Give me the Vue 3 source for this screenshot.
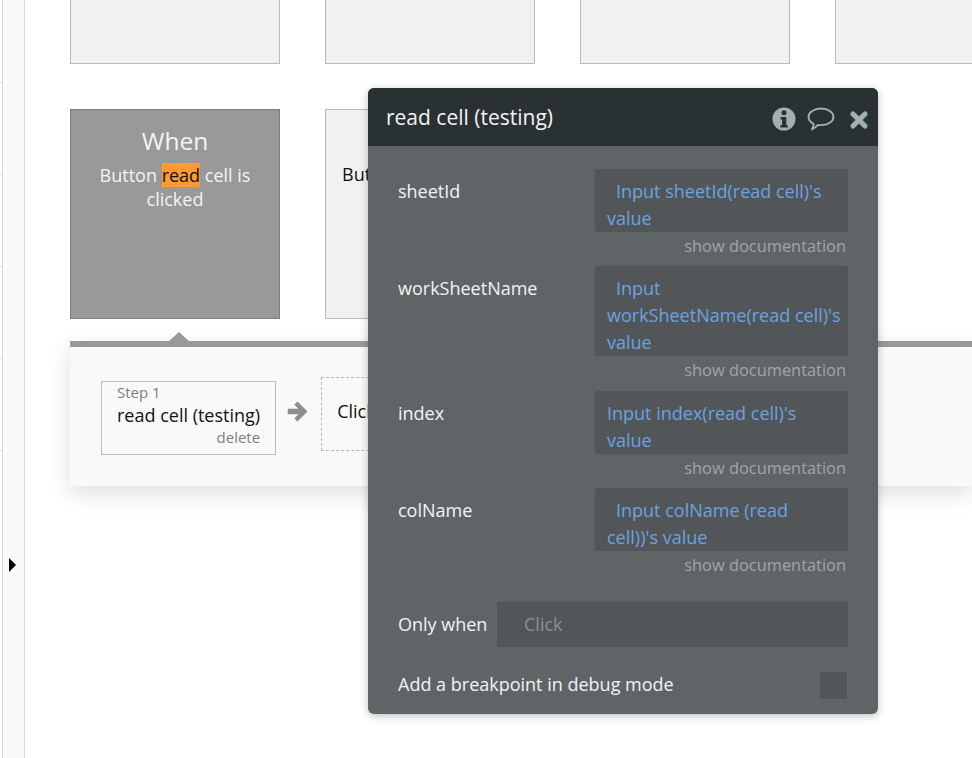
<script setup>
const fields = [
  { name: 'sheetId', value: "Input sheetId(read cell)'s value", indent: true },
  { name: 'workSheetName', value: "Input workSheetName(read cell)'s value", indent: true },
  { name: 'index', value: "Input index(read cell)'s value", indent: false },
  { name: 'colName', value: "Input colName (read cell))'s value", indent: true }
]
const ticks = [0, 1, 2, 3, 4]
</script>

<template>
  <div class="page">
    <aside class="rail">
      <div class="ticks"><span v-for="t in ticks" :key="t" class="tick"></span></div>
      <div class="strip"><span class="caret"></span></div>
    </aside>

    <main class="canvas">
      <div class="row row-top">
        <div class="card"></div>
        <div class="card"></div>
        <div class="card"></div>
        <div class="card"></div>
      </div>
      <div class="row row-second">
        <div class="card card-active">
          <div class="when">When</div>
          <div class="event">Button <span class="hl">read</span> cell is clicked</div>
        </div>
        <div class="card card-plain">Button</div>
      </div>

      <section class="steps">
        <span class="notch"></span>
        <div class="steps-body">
          <div class="step">
            <div class="step-no">Step 1</div>
            <div class="step-name">read cell (testing)</div>
            <div class="step-del">delete</div>
          </div>
          <svg class="arrow" viewBox="0 0 20 20" width="21" height="21">
            <path d="M1 7.700h10.500L7.300 3.500 9.900.800 19.200 10 9.900 19.200 7.300 16.500l4.200-4.200H1z" fill="#8e8e8e" stroke="#8e8e8e" stroke-width="0.600" stroke-linejoin="round"/>
          </svg>
          <div class="step-new">Click</div>
        </div>
      </section>
    </main>

    <section class="editor">
      <header class="editor-head">
        <h2 class="editor-title">read cell (testing)</h2>
        <svg class="ico-info" viewBox="0 0 24 24" width="24" height="24">
          <circle cx="12" cy="12" r="11.500" fill="#a4afaf"/>
          <circle cx="12" cy="5.800" r="2.500" fill="#2a3133"/>
          <path d="M8.600 10h5.700v8h1.500v2.400H8.400V18h1.700v-5.500H8.600z" fill="#2a3133"/>
        </svg>
        <svg class="ico-chat" viewBox="0 0 28 25" width="28" height="25">
          <path d="M14 1.500c7 0 12.500 3.700 12.500 8.300S21 18.100 14 18.100c-1 0-2 0-3-.2-1.800 2-3.700 3.500-6.200 4.600 1.100-1.600 1.700-3.200 1.900-5.600C3.500 15.400 1.500 12.800 1.500 9.800 1.500 5.200 7 1.500 14 1.500z" fill="none" stroke="#a4afaf" stroke-width="1.800" stroke-linejoin="round"/>
        </svg>
        <svg class="ico-close" viewBox="0 0 20 20" width="20" height="20">
          <path d="M4 4l12 12M16 4L4 16" stroke="#a4afaf" stroke-width="5.200" stroke-linecap="round" fill="none"/>
        </svg>
      </header>

      <div class="editor-body">
        <div v-for="f in fields" :key="f.name" class="field">
          <div class="field-label">{{ f.name }}</div>
          <div class="field-main">
            <div class="field-box" :class="{ indented: f.indent }">{{ f.value }}</div>
            <div class="field-doc">show documentation</div>
          </div>
        </div>

        <div class="only">
          <span class="only-label">Only when</span>
          <div class="only-box">Click</div>
        </div>

        <div class="debug">
          <span class="debug-label">Add a breakpoint in debug mode</span>
          <span class="check"></span>
        </div>
      </div>
    </section>
  </div>
</template>

<style>
html, body { margin: 0; background: #fff; }
</style>

<style scoped>
.page {
  position: relative;
  display: flex;
  width: 972px;
  height: 758px;
  overflow: hidden;
  background: #fff;
  font-family: "Open Sans", "Liberation Sans", sans-serif;
  font-size: 18px;
}

/* left rail */
.rail { display: flex; flex: 0 0 25px; height: 100%; }
.ticks { display: flex; flex-direction: column; flex: 0 0 2px; padding-top: 82px; gap: 91px; box-sizing: border-box; }
.tick { display: block; height: 1px; background: #e0e0e0; }
.strip {
  flex: 1;
  display: flex;
  align-items: flex-start;
  padding: 558px 0 0 6px;
  box-sizing: border-box;
  background: #fafafa;
  border-left: 1px solid #d9d9d9;
  border-right: 1px solid #d6d6d6;
}
.caret {
  width: 0;
  height: 0;
  border-left: 7px solid #000;
  border-top: 7px solid transparent;
  border-bottom: 7px solid transparent;
}

/* canvas */
.canvas { flex: 1; min-width: 0; padding-left: 45px; margin-top: -146px; }
.row { display: flex; gap: 45px; }
.row-second { margin-top: 45px; }
.card {
  flex: 0 0 210px;
  height: 210px;
  box-sizing: border-box;
  background: #f1f1f1;
  border: 1px solid #b9bcbc;
}
.card-active {
  background: #999;
  border-color: #7d7d7d;
  color: #f4f4f4;
  text-align: center;
  padding: 13px 20px 0;
}
.when { font-size: 24.5px; line-height: 36px; }
.event { margin-top: 4px; line-height: 24px; }
.hl { background: #ff9a33; color: #111; }
.card-plain { padding: 52px 0 0 16px; line-height: 24px; color: #111; }

/* workflow steps */
.steps {
  position: relative;
  margin: 22px 0 0;
  border-top: 6px solid #999;
  background: #f9f9f9;
  box-shadow: 0 8px 22px rgba(0, 0, 0, 0.13);
}
.notch {
  position: absolute;
  left: 99px;
  top: -15px;
  width: 0;
  height: 0;
  border-left: 10px solid transparent;
  border-right: 10px solid transparent;
  border-bottom: 9px solid #999;
}
.steps-body { display: flex; align-items: flex-start; height: 139px; box-sizing: border-box; padding: 30px 0 0 31px; }
.step {
  flex: 0 0 175px;
  height: 74px;
  margin-top: 4px;
  box-sizing: border-box;
  border: 1px solid #b9bcbc;
  background: #fafafa;
  padding: 0 15px;
}
.step-no { font-size: 15px; line-height: 20px; color: #7e7e7e; }
.step-name { margin-top: 1px; line-height: 24px; color: #111; white-space: nowrap; }
.step-del { font-size: 15px; line-height: 20px; color: #7e7e7e; text-align: right; }
.arrow { margin: 24px 0 0 11px; flex: none; }
.step-new {
  flex: 0 0 200px;
  height: 74px;
  margin-left: 13px;
  box-sizing: border-box;
  border: 1px dashed #b5b5b5;
  padding: 21px 0 0 15px;
  line-height: 24px;
  color: #111;
}

/* floating editor */
.editor {
  position: absolute;
  left: 368px;
  top: 88px;
  width: 510px;
  height: 626px;
  border-radius: 6px;
  overflow: hidden;
  background: #5f6567;
  color: #f3f3f3;
  box-shadow: 0 2px 9px rgba(0, 0, 0, 0.25);
}
.editor-head {
  display: flex;
  align-items: center;
  height: 58px;
  box-sizing: border-box;
  padding: 0 9px 0 18px;
  background: #2a3133;
}
.editor-title { flex: 1; margin: 0; font-size: 21px; font-weight: 400; line-height: 58px; }
.ico-info { margin: 4px -1px 0 0; }
.ico-chat { margin: 5px 0 0 12px; }
.ico-close { margin: 5px 0 0 14px; }

.editor-body { padding: 23px 30px 0; }
.field { display: flex; justify-content: space-between; }
.field:nth-child(3) { margin-top: 1px; }
.field-label { line-height: 27px; padding-top: 9px; }
.field-main { flex: 0 0 253px; }
.field-box {
  box-sizing: border-box;
  padding: 9px 5px 0 12px;
  background: #535658;
  border-radius: 2px;
  line-height: 27px;
  color: #69a3e0;
}
.indented { text-indent: 9px; }
.field-doc {
  height: 34px;
  box-sizing: border-box;
  padding: 0 2px 0 0;
  text-align: right;
  font-size: 16.4px;
  line-height: 27px;
  color: #a2a5a6;
}
.only { display: flex; align-items: center; margin-top: 17px; }
.only-label { flex: 0 0 99px; line-height: 27px; }
.only-box {
  flex: 1;
  height: 45px;
  padding-left: 27px;
  background: #535658;
  line-height: 45px;
  color: #8c8f90;
}
.debug { display: flex; justify-content: space-between; align-items: center; margin-top: 25px; line-height: 27px; }
.debug-label { margin-top: -2px; }
.check { width: 27px; height: 27px; margin-right: 1px; background: #535658; }
</style>
